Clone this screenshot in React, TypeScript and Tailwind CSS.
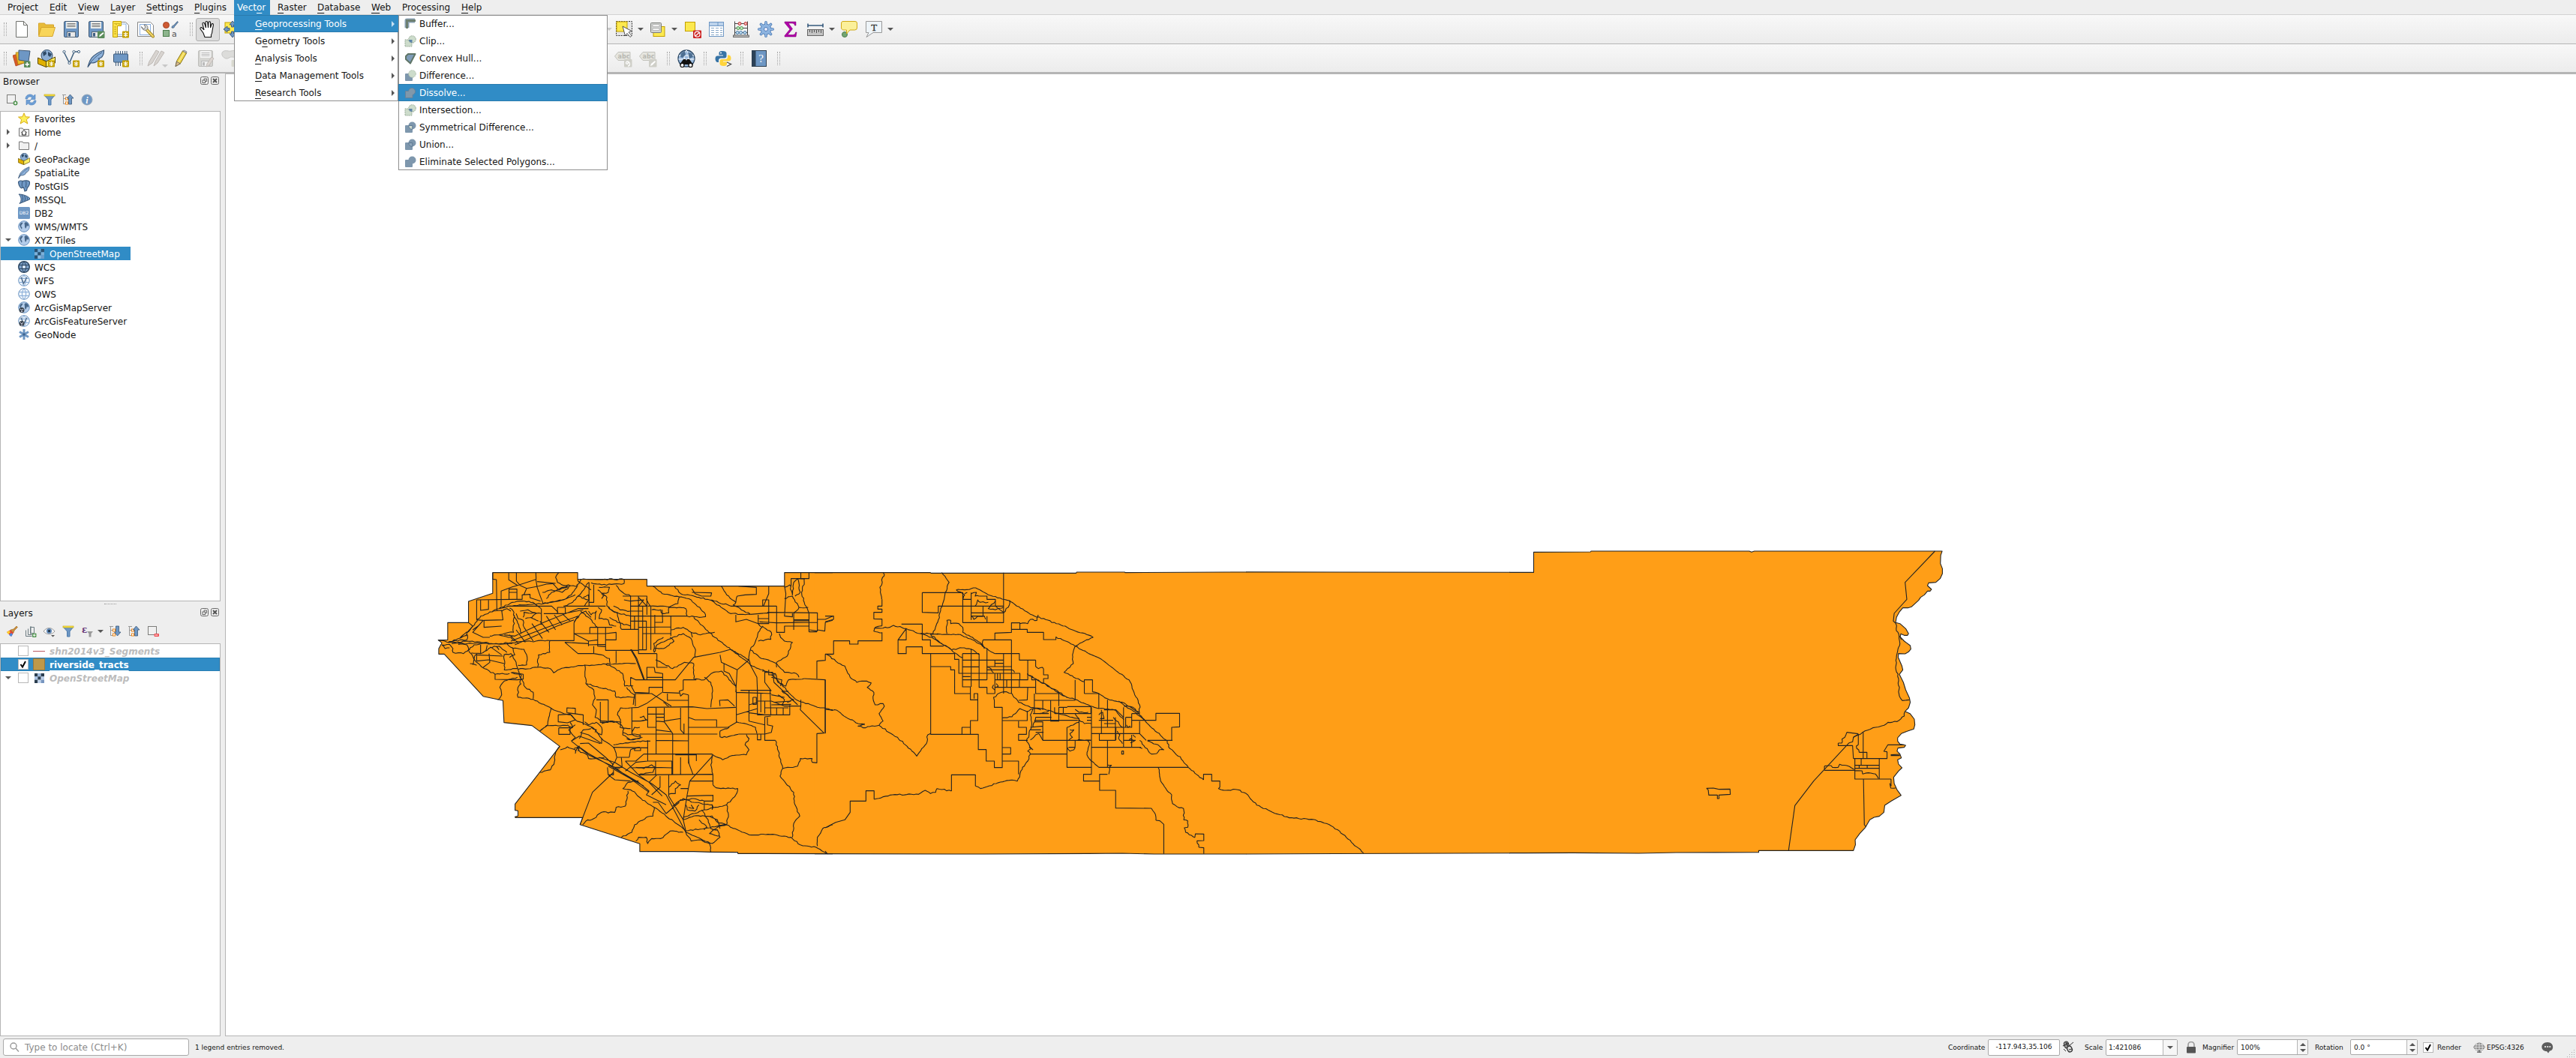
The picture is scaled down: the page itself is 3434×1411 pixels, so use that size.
import React from "react";

/* ---------- toolbar icons ---------- */

type IconProps = { children: React.ReactNode; s?: number; vb?: string; cls?: string };
const Ic = ({ children, s = 24, vb = "0 0 24 24", cls = "" }: IconProps) => (
  <svg width={s} height={s} viewBox={vb} fill="none" className={"block shrink-0 " + cls}>
    {children}
  </svg>
);

const NewBadge = () => (
  <g>
    <rect x="14" y="14.500" width="9" height="9" rx="1" fill="#c4a000" />
    <path d="M18.500 16v6M15.800 17.500l5.400 3M21.200 17.500l-5.400 3" stroke="#fff" strokeWidth="1.300" />
  </g>
);

const FileIcon = () => (
  <Ic><path d="M4.500 1.500h10l5 5v16h-15z" fill="#fff" stroke="#6e706c" /><path d="M14.500 1.500v5h5" stroke="#6e706c" /></Ic>
);
const FolderIcon = () => (
  <Ic>
    <path d="M1.500 20V4h8l1 2h11v4" fill="#e8bc3a" stroke="#d5a52c" />
    <path d="M1.500 21.500L5 9.500h18.500L20 21.500z" fill="#f8d559" stroke="#d5a52c" />
  </Ic>
);
const Disk = ({ grey = false }: { grey?: boolean }) => (
  <g>
    <rect x="2.500" y="1.500" width="19" height="21" rx="1.500" fill={grey ? "#d5d5d2" : "#6e97c4"} stroke={grey ? "#bdbdba" : "#415a75"} />
    <rect x="5" y="2" width="14" height="9" fill={grey ? "#f4f4f4" : "#eceeec"} />
    <path d="M6.500 4.500h11M6.500 6.500h11M6.500 8.500h11" stroke={grey ? "#bbb" : "#777"} />
    <rect x="6.500" y="15.500" width="11" height="7" fill={grey ? "#f0f0f0" : "#e9e9e9"} stroke={grey ? "#bbb" : "#5a6b7c"} />
    <rect x="8" y="17" width="3" height="4.500" fill={grey ? "#bbb" : "#3e5e82"} />
  </g>
);
const SaveIcon = () => <Ic><Disk /></Ic>;
const SaveAsIcon = () => (
  <Ic><Disk /><rect x="14" y="14.500" width="9.500" height="9.500" rx="1" fill="#5a8c5a" /><path d="M16 22l1-2.500 4.500-3.500 1 1.500-4.500 4z" fill="#fff" /></Ic>
);
const LayoutIcon = () => (
  <Ic>
    <path d="M1.500 2.500h17l4 4v15h-21z" fill="#fff" stroke="#888" />
    <rect x="4" y="5" width="15" height="14" stroke="#88aede" />
    <path d="M1.500 1.500h11v6h-5v15h-6z" fill="#fbe14a" stroke="#c4a000" />
    <path d="M4 4v1M6 4v2M8 4v1M10 4v2M3.500 9h2M3.500 12h2M3.500 15h2M3.500 18h2" stroke="#a98b00" />
    <NewBadge />
  </Ic>
);
const LayoutMgrIcon = () => (
  <Ic>
    <path d="M1.500 2.500h17l4 4v15h-21z" fill="#fff" stroke="#888" />
    <rect x="4.500" y="5.500" width="14" height="14" stroke="#88aede" />
    <path d="M13 12l9 9.500" stroke="#a08420" strokeWidth="4" strokeLinecap="round" />
    <path d="M13.500 12.500l8.500 9" stroke="#f3d86b" strokeWidth="2" strokeLinecap="round" />
    <path d="M6.500 8.500l3 3 2.500-2-2-3.500c4-.5 6 3 4.500 6-2 2.500-7 1.500-8-3.500z" fill="#d8dad8" stroke="#777" />
  </Ic>
);
const StyleIcon = () => (
  <Ic>
    <circle cx="6.500" cy="6.500" r="4" fill="#cf5b35" stroke="#a4421f" />
    <path d="M14 10c0-2 1-3 2.500-3l5-5.500 1 1-5 6c0 1.500-1.500 2-3.500 1.500z" fill="#6e97c4" stroke="#415a75" strokeWidth=".8" />
    <rect x="2.500" y="13.500" width="8" height="8" fill="#8db58d" stroke="#4d7d4d" />
    <text x="14" y="22" fontSize="11" fontFamily="DejaVu Sans" fill="#555">a</text>
  </Ic>
);
const HandIcon = () => (
  <Ic>
    <path d="M8 22.500L6 17l-4-5.500c-.5-1.500 1.500-2.500 2.500-1.200L7 13 5 5c-.3-2 2.200-2.500 2.800-.5L9.500 10 9 3c0-2 2.600-2 2.800 0l.7 7 .5-7c.2-1.800 2.600-1.500 2.600.3L15.500 10l1.500-4.500c.6-1.600 2.700-1 2.400.8L18 14c0 3-.5 4-1.500 5.500v3z" fill="#fff" stroke="#111" strokeWidth="1.100" />
  </Ic>
);
const PanSelIcon = () => (
  <Ic>
    <rect x="2" y="3" width="18" height="14" fill="#fce94f" stroke="#c4a000" />
    <path d="M12 1l4 5h-2.500v3h-3V6H8zM12 23l4-5h-2.500v-3h-3v3H8zM0 12l5-4v2.500h3v3H5V16z" fill="#6e97c4" stroke="#3b5878" strokeWidth=".9" />
  </Ic>
);
const SelectIcon = () => (
  <Ic>
    <rect x="1.500" y="1.500" width="21" height="19" stroke="#333" strokeDasharray="2 1.300" fill="#e4e4e4" />
    <rect x="2" y="2" width="14" height="13" fill="#fce94f" stroke="#c4a000" />
    <path d="M10 8l3.500 13 2.500-3.500 4 5 2-1.800-4-4.700 4-1.500z" fill="#fff" stroke="#444" strokeWidth=".9" />
  </Ic>
);
const FormIcon = () => (
  <Ic>
    <rect x="6" y="8.500" width="15" height="13" fill="#fce94f" stroke="#c4a000" />
    <rect x="2.500" y="3.500" width="14" height="13" rx="1" fill="#d0d2d0" stroke="#7b7d7a" />
    <rect x="5" y="6" width="9" height="2.500" fill="#fff" stroke="#888" strokeWidth=".5" />
    <rect x="5" y="11" width="9" height="2.500" fill="#fff" stroke="#888" strokeWidth=".5" />
  </Ic>
);
const DeselectIcon = () => (
  <Ic>
    <rect x="1.500" y="2.500" width="13" height="12" fill="#fce94f" stroke="#c4a000" />
    <rect x="12" y="13.500" width="11" height="10.500" rx="1" fill="#cc2222" />
    <circle cx="17.500" cy="18.700" r="3.500" stroke="#fff" strokeWidth="1.200" /><path d="M15 21l5-4.500" stroke="#fff" strokeWidth="1.200" />
  </Ic>
);
const TableIcon = () => (
  <Ic>
    <rect x="2.500" y="2.500" width="19" height="19" fill="#fff" stroke="#6e97c4" />
    <rect x="3" y="3" width="18" height="4" fill="#bcd3ec" /><path d="M3 7.500h18M14 3v4" stroke="#6e97c4" />
    <path d="M5 10.500h4M11 10.500h4M17 10.500h3M5 13.500h4M11 13.500h4M17 13.500h3M5 16.500h4M11 16.500h4M17 16.500h3M5 19.500h4M11 19.500h4M17 19.500h3" stroke="#88a8c8" />
  </Ic>
);
const AbacusIcon = () => (
  <Ic>
    <path d="M3.500 1.500v19M20.500 1.500v19M3.500 4.500h17M3.500 10.500h17M3.500 16.500h17" stroke="#444" />
    <rect x="1.500" y="20" width="21" height="2.500" fill="#bbb" stroke="#555" strokeWidth=".8" />
    <g strokeWidth="1"><g fill="#f2b4b4" stroke="#c03030"><circle cx="10" cy="4.500" r="2" /><circle cx="18" cy="4.500" r="2" /></g>
    <g fill="#c2e6c2" stroke="#4c9a4c"><circle cx="8" cy="10.500" r="2" /><circle cx="12.500" cy="10.500" r="2" /></g>
    <g fill="#bcd9ee" stroke="#4a7ba6"><circle cx="7" cy="16.500" r="2" /><circle cx="11.500" cy="16.500" r="2" /><circle cx="17" cy="16.500" r="2" /></g></g>
  </Ic>
);
const GearIcon = () => (
  <Ic>
    <g stroke="#4d7bb5" strokeWidth="3.600" strokeLinecap="round"><path d="M12 2.800v18.400M2.800 12h18.400M5.500 5.500l13 13M18.500 5.500l-13 13" /></g>
    <circle cx="12" cy="12" r="7" fill="#8db4e0" stroke="#4d7bb5" />
    <g stroke="#8db4e0" strokeWidth="2" strokeLinecap="round"><path d="M12 2.800v18.400M2.800 12h18.400M5.500 5.500l13 13M18.500 5.500l-13 13" /></g>
    <circle cx="12" cy="12" r="2.500" fill="#eef" stroke="#4d7bb5" />
  </Ic>
);
const SigmaIcon = () => (
  <Ic><path d="M4 2h15v5h-1.500C17 4.800 16 4 14 4H9l5.500 7.500L8 19.500h6.500c2.500 0 3.500-1 4.200-3.500H20L19 22H4v-1.500l7-8.500L4 3.500z" fill="#b000a8" stroke="#75006f" strokeWidth=".5" /></Ic>
);
const RulerIcon = () => (
  <Ic>
    <path d="M2 7h20M2 4.500v5M22 4.500v5" stroke="#35597c" strokeWidth="1.600" />
    <rect x="1.500" y="12.500" width="21" height="8" fill="#c4c4c4" stroke="#666" />
    <path d="M4.500 13v3M7.500 13v4M10.500 13v3M13.500 13v4M16.500 13v3M19.500 13v4" stroke="#555" />
  </Ic>
);
const TipIcon = () => (
  <Ic>
    <circle cx="6" cy="19" r="3.500" fill="#73a673" stroke="#4d7d4d" />
    <path d="M4 1.500h16a2.500 2.500 0 012.500 2.500v6a3 3 0 01-3 3H13l-4.500 5V13H5c-2 0-3.500-1-3.500-3V4C1.500 2.500 2.500 1.500 4 1.500z" fill="#fbf09a" stroke="#d0aa18" />
  </Ic>
);
const TextIcon = () => (
  <Ic>
    <path d="M1.500 1.500h21v15H11l-9 6 3-6H1.500z" fill="#eef4f8" stroke="#999" />
    <text x="12.200" y="14" fontSize="13" fontFamily="Liberation Serif" textAnchor="middle" fill="#333" stroke="#333" strokeWidth=".3">T</text>
  </Ic>
);
const DataSrcIcon = () => (
  <Ic>
    <path d="M0 8l10-3 5 13-11 4z" fill="#d85a28" stroke="#a83c12" strokeWidth=".7" />
    <path d="M4 4l13-1 1 14-11 3z" fill="#e9b82c" stroke="#a8820a" strokeWidth=".7" />
    <path d="M8 1l15 1-2 14-13-2z" fill="#6e97c4" stroke="#415a75" />
    <rect x="15" y="15.500" width="8.500" height="8.500" rx="1" fill="#5a8c5a" /><path d="M19.200 17v5.500M16.500 19.700H22" stroke="#fff" strokeWidth="1.500" />
  </Ic>
);
const GeoPkg = ({ badge = true, s = 24 }: { badge?: boolean; s?: number }) => (
  <Ic s={s}>
    <circle cx="12.500" cy="8" r="7.500" fill="#8caed4" stroke="#2f4a66" />
    <path d="M7 4l4-2 1 4-4 3zM14 3l5 3-2 4-3-2z" fill="#2f4a66" />
    <path d="M.5 11l11 5v7.500L.5 19z" fill="#e0b000" stroke="#5d4a00" />
    <path d="M11.500 16L23.500 10v8l-12 5.500z" fill="#fcee62" stroke="#5d4a00" />
    {badge && <NewBadge />}
  </Ic>
);
const VNewIcon = () => (
  <Ic>
    <path d="M2.500 4l7 14L16 3h6" stroke="#41617f" strokeWidth="1.500" />
    <g fill="#fff" stroke="#41617f"><circle cx="2.500" cy="3" r="1.600" /><circle cx="9.500" cy="18" r="1.600" /><circle cx="15.500" cy="3" r="1.600" /><circle cx="22" cy="3" r="1.600" /></g>
    <NewBadge />
  </Ic>
);
const Feather = ({ badge = true, s = 24 }: { badge?: boolean; s?: number }) => (
  <Ic s={s}>
    <path d="M1 23.500C3 17 3.500 8 22.500 1c0 5-1 8-4 10l-3 1 1 1c-4 5-8 5-11.500 5z" fill="#8fb3dc" stroke="#3c5878" strokeWidth="1.200" />
    <path d="M1 23.500C5 16 10 10 20 4" stroke="#3c5878" />
    {badge && <NewBadge />}
  </Ic>
);
const ChipIcon = () => (
  <Ic>
    <path d="M5.500 2v20M8.500 2v20M11.500 2v20M14.500 2v20M17.500 2v20M20 2v18" stroke="#3b5878" />
    <rect x="2.500" y="6" width="19" height="11" rx="1" fill="#6e97c4" stroke="#3b5878" />
    <NewBadge />
  </Ic>
);
const PencilsGrey = () => (
  <Ic>
    <path d="M1 22l2-6L12 1l4 2L7 18z" fill="#d8d4d0" stroke="#bdb8b4" /><path d="M9 22l2-6 8-14 4 2-9 14z" fill="#d8d4d0" stroke="#bdb8b4" />
  </Ic>
);
const PencilIcon = () => (
  <Ic>
    <path d="M5 22.500l1.500-7L14.500 2l5 3-8 13.500z" fill="#efd651" stroke="#8a7410" />
    <path d="M14.500 2l2-1 3.500 2-.5 2z" fill="#bbb" stroke="#666" strokeWidth=".6" /><path d="M5 22.500l1.500-6.500 5 3z" fill="#d9b98b" stroke="#555" strokeWidth=".7" />
    <path d="M9 17L17 3.500" stroke="#fff3a0" />
  </Ic>
);
const SaveGrey = () => (
  <Ic><Disk grey /><path d="M13 23l1-4 6-9 3 2-6 9z" fill="#dcd6d2" stroke="#c2bcb8" /></Ic>
);
const BlobGrey = () => (
  <Ic><path d="M2 3c4-3 8 0 11-1s8-1 9 3-3 6-7 5-5 3-9 2-7-6-4-9z" fill="#dcdcda" stroke="#c6c6c4" /><rect x="13.500" y="14" width="9" height="9" rx="1" fill="#d9d9d0" /></Ic>
);
const TagIcon = ({ pen = false }: { pen?: boolean }) => (
  <Ic>
    <path d="M.5 9L5 3.500h16v11H5z" fill="#e6e6e0" stroke="#c2c2bc" />
    <text x="12.500" y="12" fontSize="8" fontWeight="bold" fontFamily="DejaVu Sans" textAnchor="middle" fill="#b8b8b2">abc</text>
    <rect x="13" y="13" width="10.500" height="10.500" rx="1" fill="#cfcfc8" />
    {pen ? <path d="M15 22l1-3 5-4 1 1.500-4.500 4.500z" fill="#fff" /> : <path d="M18 22c3 0 3.500-4 1-5.500s-4.500 1-3 2.500c2 1 3-1 2-2" stroke="#fff" strokeWidth="1.300" />}
  </Ic>
);
const MetaSearch = () => (
  <Ic>
    <circle cx="12" cy="12" r="11" fill="#9dbde0" stroke="#2f4a66" strokeWidth="1.300" />
    <path d="M12 1c-4 4-4 12 0 16M12 1c4 4 4 12 0 16M2 8h20M1.500 13h21" stroke="#fff" />
    <path d="M5 5l5-3 1 5-4 4-3-1zM14 4l5 1 2 5-5 2z" fill="#4d6f92" />
    <path d="M8 13h3l1 2 1-2h3l5 7H3z" fill="#111" /><circle cx="6.500" cy="21" r="2.600" fill="#fff" stroke="#111" strokeWidth="1.300" /><circle cx="17.500" cy="21" r="2.600" fill="#fff" stroke="#111" strokeWidth="1.300" />
  </Ic>
);
const PythonIcon = () => (
  <Ic>
    <path d="M11 2c-4 0-4.500 1.500-4.500 3v2.500H12v1H4.500C2.500 8.500 1.500 10 1.500 12.500S3 17 4.500 17H6v-2.500c0-2 1.500-3 3-3h5c1.500 0 2.500-1 2.500-2.500V5c0-2-2-3-5.500-3z" fill="#3673a5" />
    <path d="M12.500 22c4 0 4.500-1.500 4.500-3v-2.500h-5v-1h7.500c2 0 3-1.500 3-4S21 7.500 19.500 7.500H18V10c0 2-1.500 3-3 3h-5c-1.500 0-2.500 1-2.500 2.500V19c0 2 2 3 5 3z" fill="#ffd43b" />
    <circle cx="9" cy="4.500" r="1" fill="#fff" /><path d="M17 17l5.500 2.500L17 22.500" stroke="#444" strokeWidth="1.300" fill="#fff" />
  </Ic>
);
const BookIcon = () => (
  <Ic>
    <rect x="2.500" y="1.500" width="19" height="21" fill="#6e97c4" stroke="#2c3e50" /><rect x="3" y="2" width="4.500" height="20" fill="#2c4258" />
    <text x="14.500" y="17" fontSize="15" fontFamily="Liberation Serif" textAnchor="middle" fill="#fff">?</text>
  </Ic>
);

/* ---------- small 16px icons ---------- */

const S = ({ children }: { children: React.ReactNode }) => <Ic s={16} vb="0 0 16 16">{children}</Ic>;
const BoxPlus = () => <S><rect x="1.500" y="1.500" width="11" height="11" fill="#f0f0f0" stroke="#7d7d7a" /><circle cx="12.500" cy="12.500" r="3" fill="#5a9a5a" /><path d="M12.500 11v3M11 12.500h3" stroke="#fff" /></S>;
const BoxMinus = () => <S><rect x="1.500" y="1.500" width="11" height="11" fill="#f0f0f0" stroke="#7d7d7a" /><rect x="9.500" y="11" width="6.500" height="4" rx="1" fill="#ef4b50" /><path d="M10.500 13h4" stroke="#fff" /></S>;
const Refresh = () => <S><path d="M1 7c0-4 3-6 6-6 2 0 3 .5 4.500 2L14 1v6.500H8L10 5C7 3 4 4 3.500 7zM15 9c0 4-3 6-6 6-2 0-3-.5-4.500-2L2 15V8.500h6L6 11c3 2 6 1 6.500-2z" fill="#6e9fd6" stroke="#4a7db8" strokeWidth=".6" /></S>;
const Funnel = () => <S><path d="M1 2h14l-5 6v7H6.500V8z" fill="#6e97c4" stroke="#4d7bad" /><rect x="1" y="1" width="14" height="2" fill="#fce94f" stroke="#c4a000" strokeWidth=".6" /></S>;
const TreeArrow = ({ down = false }: { down?: boolean }) => (
  <S>
    <path d="M1.500 1v12.500h3M1.500 6.500h3M0 1.500h5" stroke="#999" /><rect x="4.500" y="5" width="3" height="3" fill="#fff" stroke="#f08a1c" /><rect x="4.500" y="11" width="3" height="3" fill="#fff" stroke="#f08a1c" />
    {down ? <path d="M8.500 1h4v8H15l-4.500 5L6.500 9h2z" fill="#6e97c4" stroke="#3b5878" strokeWidth=".8" /> : <path d="M8.500 14h4V6H15l-4.500-5L6.500 6h2z" fill="#6e97c4" stroke="#3b5878" strokeWidth=".8" />}
  </S>
);
const Info = () => <S><circle cx="8" cy="8" r="7" fill="#6e97c4" stroke="#9ab" /><text x="8" y="12.500" fontSize="12" fontStyle="italic" fontWeight="bold" fontFamily="Liberation Serif" textAnchor="middle" fill="#fff">i</text></S>;
const Brush = () => <S><path d="M1 9l5-3 4 4-3 5z" fill="#e84030" /><path d="M1 9l3-2 2 2-3 3z" fill="#fad02c" /><path d="M4 13l3-3 2 2-2 3z" fill="#4a8be0" /><path d="M6 6l4-1 4-4 1.500 1.500L11 7l-1 3z" fill="#c89040" stroke="#a06a20" strokeWidth=".6" /></S>;
const AddGroup = () => <S><path d="M1.500 6.500v8h8M4.500 4.500v8h8M7.500 2.500h5v8h-5zM8 1v12" stroke="#6b7a80" /><rect x="10" y="10.500" width="5.500" height="5.500" rx="1" fill="#5a9a5a" /><path d="M12.700 11.500v3.500M11 13.200h3.500" stroke="#fff" /></S>;
const Eye = () => <S><path d="M0 8c4-6 11-6 15 0-4 5-11 5-15 0z" fill="#f4f4f4" stroke="#999" /><circle cx="7.500" cy="7.500" r="3.500" fill="#5f87b5" /><circle cx="7.500" cy="7.500" r="1.500" fill="#1c2b3a" /><path d="M10 13h5l-2.500 2.500z" fill="#555" /></S>;
const Epsilon = () => <S><text x="1" y="10" fontSize="12" fontWeight="bold" fontFamily="DejaVu Serif" fill="#6a3a78">ε</text><path d="M8 8h8l-2.500 3v4.500h-3V11z" fill="#999" /></S>;

const Star = () => <S><path d="M8 .8l2.100 5 5.400.3-4.200 3.400 1.500 5.500L8 11.900 3.200 15l1.500-5.500L.5 6.100l5.400-.3z" fill="#fdf05a" stroke="#d8ac18" /></S>;
const Folder16 = ({ home = false }: { home?: boolean }) => (
  <S><path d="M1.500 13.500V3H6l1 1.500h7.500v9z" fill="#f0f0f0" stroke="#777" />{home && <path d="M4.500 9L8 5.500 11.500 9M5.500 8.500V12h5V8.500" stroke="#222" />}</S>
);
const Pg = () => <S><path d="M.5 2.500C2 .5 5 1 6 1.500c3-1 8-1 9.500 1 .5 3-1.500 7-3 7.500l-1 4-2.500 1-1.500-5-3 1C2.500 10 .5 6 .5 2.500z" fill="#6e97c4" stroke="#3a587a" strokeWidth="1.100" /><path d="M6 2c-1 3-1 6 0 8M10.500 2c1 3 0 5 0 8" stroke="#3a587a" /></S>;
const Ms = () => <S><path d="M1 1c5 0 11 2 14.500 5v2L2 13.500C5 10 5 5 1 1z" fill="#6e97c4" stroke="#3a587a" /><path d="M5 2c2 3 2 7 0 10M8.500 3c1.500 3 1.500 5 0 8M12 5c.7 2 .7 3 0 4.500" stroke="#3a587a" /></S>;
const Db2 = () => <S><rect width="16" height="16" rx="1.500" fill="#6e97c4" /><text x="8" y="10" fontSize="6" fontFamily="DejaVu Sans" textAnchor="middle" fill="#fff">DB2</text></S>;
const Globe16 = ({ kind }: { kind: string }) => {
  const land = kind === "wms" || kind === "ams";
  const wcs = kind === "wcs";
  return (
    <S>
      <circle cx="8" cy="8" r="7.300" fill={wcs ? "#7d9fc6" : land ? "#b4cdea" : "#eef5fc"} stroke={wcs ? "#29435e" : "#6a93c0"} strokeWidth={wcs ? 1.4 : 1} />
      {land && <path d="M2 6l1.500-2.500 2-1 1 1L5 5.500 4 7.500l1.500 2L5 12 3.500 9.500zM8.500 3.500l2-1.500 2.500 1.500 1.500 3-1.500 1.500-1-1.500-1 3-1 1.500-1-2.500V7z" fill="#47678a" />}
      {!land && <path d="M8 1C4.500 5 4.500 11 8 15M8 1c3.500 4 3.500 10 0 14M1.500 5.500h13M1.500 10.500h13" stroke={wcs ? "#29435e" : "#84aad6"} />}
      {wcs && <rect x="6" y="6.500" width="4" height="3" fill="#dfeaf6" />}
      {(kind === "wfs" || kind === "afs") && <path d="M4 3.500L7.500 12 12 3.500" stroke="#56708c" strokeWidth="1.500" />}
      {(kind === "ams" || kind === "afs") && <g><circle cx="5" cy="11.500" r="3.500" fill="#3c4650" /><path d="M3 10l2 2 2-2M4 13.500h2" stroke="#dde" /></g>}
    </S>
  );
};
const GeoNode = () => <S><path d="M8 1v14M2 4.500l12 7M14 4.500l-12 7" stroke="#6e97c4" strokeWidth="3" /><circle cx="8" cy="8" r="1.800" fill="#3f6590" /></S>;
const Tiles = ({ sel = false }: { sel?: boolean }) => {
  const dark = sel ? "#2b5272" : "#2c3e50";
  const cells = [[0, 0, dark], [4.3, 0, sel ? "#6ea6d2" : "#9db9dc"], [8.6, 0, dark], [0, 4.3, sel ? "#7db0d8" : "#a9c2e2"], [4.3, 4.3, dark], [8.6, 4.3, sel ? "#7db0d8" : "#b9cde8"], [0, 8.6, dark], [4.3, 8.6, sel ? "#8fbce0" : "#c0d3ec"], [8.6, 8.6, sel ? "#6a9ccb" : "#7896c0"]] as [number, number, string][];
  return <Ic s={13} vb="0 0 13 13">{cells.map(([x, y, c], i) => <rect key={i} x={x} y={y} width="4.400" height="4.400" fill={c} />)}</Ic>;
};

/* ---------- geoprocessing icons ---------- */

const Geo = ({ kind }: { kind: string }) => {
  const b = "#7e97ad";
  return (
    <Ic s={16} vb="0 0 16 16">
      {kind === "buffer" && <g><path d="M3.500 13V3.500H14" stroke="#8ba2b5" strokeWidth="6" strokeLinejoin="round" /><path d="M3.500 14V3.500H15" stroke="#6d7f70" strokeWidth="3" /></g>}
      {kind === "clip" && <g><rect x="1" y="6" width="9" height="9" fill="#cddccb" stroke="#8fa38e" strokeDasharray="1.500 1" /><circle cx="10.500" cy="5.500" r="4.800" fill="#cddccb" stroke="#8fa38e" strokeDasharray="1.500 1" /><path d="M6 6h4.500v4C8 10 6 8.500 6 6z" fill="#5d83a8" /></g>}
      {kind === "hull" && <path d="M5 2h9.500L8 14.500 2 9V5z" fill="#7e9cb8" stroke="#5f7567" strokeWidth="2" strokeLinejoin="round" />}
      {kind === "diff" && <g><rect x="1" y="5" width="10" height="10" rx="1" fill={b} /><circle cx="10.500" cy="5.500" r="4.800" fill="#cddccb" stroke="#a9bba7" strokeDasharray="1.500 1" /></g>}
      {kind === "dissolve" && <g fill="#8098ab" stroke="#66829a"><path d="M1.500 5.500h4c1-6 9.500-5 9 1-.2 2-1.500 3.500-3.500 4v4H1.500z" /></g>}
      {kind === "merge" && <g fill={b}><rect x="1" y="5" width="10" height="10" rx="1" /><circle cx="10.500" cy="5.500" r="5" /></g>}
      {(kind === "symdiff" || kind === "union") && <g fill={b}><rect x="1" y="5" width="10" height="10" rx="1" /><circle cx="10.500" cy="5.500" r="5" /><path d="M5.800 5.500h5v5c-3 0-5-2-5-5z" fill={kind === "symdiff" ? "#d2dccf" : "#90a7ba"} stroke="#5e7a94" /></g>}
    </Ic>
  );
};

/* ---------- map ---------- */

type Section = { transform: string; straight: string; rough: string };

const WEST: Section = {
  transform: "translate(560 740) scale(0.35077 0.33333)",
  straight: `276,71 276,97 290,99 292,225;215,180 350,178 388,178 388,160 418,158 418,172 458,185;215,180 215,260;230,180 230,222 260,218 260,180;308,205 308,145 350,128 370,122;338,180 338,137 368,137 368,178;338,150 368,150;
337,71 337,100 370,122 440,98 445,130 455,160 468,196;440,71 441,98;366,71 366,105 380,122 405,134 450,125 480,117 505,115;445,107 515,114;405,134 395,158;
340,205 500,205 525,230;522,210 552,210 552,235 522,235 522,210;470,235 545,235 620,220;275,225 310,222 315,260 243,262 243,290 310,285;215,260 240,262 200,310 240,330 265,330;200,300 220,285 240,262;461,215 461,280;
320,320 360,325 470,270 600,215 640,215;345,345 470,295 600,245 585,270;360,360 520,285 585,260;340,320 375,355;365,300 400,350;395,290 430,345;425,275 465,335;455,265 490,310;480,245 515,300;510,240 540,280;540,235 570,265;
493,343 585,343 585,272;230,360 230,395;255,362 250,385;290,365 300,380;210,400 315,405;215,425 260,420 320,435;215,395 215,425;262,395 265,430 240,450;285,478 285,498 370,500 392,497 392,478 350,470;270,370 310,400;
525,640 525,668 560,672 590,660 570,637 525,640;558,632 558,612 590,614 590,635;527,692 527,718 570,718 570,692 527,692;560,632 620,640 620,680;
670,580 715,580 715,670 685,670 685,588;608,710 640,720 690,755;690,755 690,735;575,745 605,725 685,755;575,745 640,800 740,850 870,950;608,755 640,753 705,810 735,840;600,765 640,795 700,830 830,910 870,945 860,960 935,1000;680,810 740,830 800,870 880,915 935,960 960,1010 1010,1110;715,845 850,925;
712,850 715,880 735,880 735,855 760,855;715,880 740,900 800,905;735,870 655,950 608,1079;765,812 768,850 740,850;
1025,905 1113,905;1000,1060 1015,960 1025,905 1113,803;1113,960 1113,985 1080,985;1015,965 1113,962;830,880 1113,878;1113,878 1113,920;945,880 945,965 1000,1060 1010,1105;895,825 957,825 957,880;895,850 957,852;895,825 895,880;865,742 865,825 895,825;990,810 990,878;1020,800 1022,835 1037,878;970,800 1050,800 1050,825;960,715 960,880;850,797 1110,797;835,717 1130,717;1210,717 1310,717;897,690 897,797;897,742 1020,744;1020,560 1020,835;
1020,690 1170,690 1205,668;1020,650 1045,660 1127,660 1127,688;865,610 865,690 897,690;865,610 1035,608 1090,615 1200,610;897,612 897,717;865,637 928,637 928,612;897,650 928,650;928,665 990,655;990,612 990,700 1003,715;897,665 928,668 960,715;897,700 955,708;928,637 928,668;1003,675 1003,717;
818,555 818,605;805,612 805,717;805,665 837,665 865,660;800,612 830,610 860,595 920,550;815,555 880,555 955,605;735,770 865,772;865,745 875,745;780,825 820,825 850,797;750,810 795,810;780,825 830,880;780,865 820,830 865,825;830,880 870,910 900,880;870,910 920,965;912,885 912,930 880,960;815,770 815,783 838,783 838,770;800,852 895,850;
642,110 642,205;660,120 660,190 640,190;770,165 862,165 862,205;775,180 800,185;800,165 800,298;800,205 862,205 862,240;830,165 830,395 900,395;846,205 846,380;800,245 1015,245;800,265 860,265 860,380 832,380;845,315 955,315;877,205 877,380;892,240 892,315;830,290 953,288;953,245 953,325;920,220 922,270 892,270;800,225 846,225;800,185 850,180 830,205;830,170 862,205;815,245 815,298;
545,205 705,205;585,315 705,315 745,310 745,340 705,340;585,315 640,345 675,340;640,360 705,358;645,290 645,315;645,290 730,290;675,290 675,365 705,367;705,290 705,382 830,382;550,350 600,395 660,395;550,350 640,355;640,345 640,365;660,365 660,395 690,400;745,385 745,433;765,298 830,298;
800,378 820,415 850,500;803,378 824,415 853,500;862,500 862,450 890,450 893,470 922,475 922,550;850,500 970,500 1040,410 1140,390 1180,378;862,490 922,490;800,490 800,520 815,550 870,553 870,530 922,530;800,490 820,500 850,500;900,395 900,450 940,450;1000,500 1050,500;1000,500 1000,540 985,545 990,565 1000,555 1020,560;940,555 940,582 1020,582;922,550 985,553;
1033,135 1045,155 1070,165 1105,165 1108,152 1033,150;1205,165 1235,160 1278,158 1278,130 1210,125;1325,125 1325,155 1305,205;1302,205 1302,180 1325,180 1325,275 1285,275 1285,235;1285,255 1325,255;1200,240 1200,268 1240,258 1285,275;1320,230 1510,232 1510,305 1480,300;1355,205 1355,310 1385,310 1385,285 1480,285;1290,268 1355,272 1510,270;1385,125 1390,155 1385,245 1415,248 1415,230;1410,125 1410,95 1478,95 1478,71;1447,71 1447,95;1478,230 1478,308;1420,235 1420,300;1420,260 1478,260;1420,264 1478,264;1510,258 1540,258 1568,245;1510,300 1538,305 1540,270 1568,262;1180,205 1355,205;1255,238 1325,232;1478,308 1508,308;
1140,400 1145,430 1205,460 1250,420;1155,435 1155,465 1175,475 1200,525 1202,550;1205,460 1200,550;1255,440 1280,490 1282,542;1310,465 1310,510 1335,545;1460,495 1540,500 1540,713;1310,470 1340,470 1345,510 1395,560 1435,600;1325,460 1325,480 1350,480;1335,490 1375,500 1370,525;
1218,542 1330,542 1333,640;1202,550 1335,555;1202,550 1202,668;1250,542 1250,665 1310,680;1282,542 1282,640 1405,640 1405,600;1295,555 1295,630;1250,600 1282,590;1265,570 1265,598 1278,598 1278,570 1265,570;1282,585 1335,585 1385,605 1447,605 1447,580;1310,612 1400,612;1202,640 1282,615;1355,612 1355,640;1380,612 1380,640;1250,632 1310,640;1335,560 1385,570;1310,585 1310,635;1345,590 1410,585;1335,600 1410,598;
1140,605 1138,582 1170,580 1195,605;1333,645 1310,648 1310,742 1350,742;1320,650 1320,680 1340,685 1335,710 1310,717;1295,718 1295,740 1282,740 1282,718;1447,605 1445,620 1535,713 1508,715 1508,832 1490,830;1508,495 1508,425 1540,422 1540,398 1568,398;885,990 905,990 935,1035 985,990;1080,985 1080,1020;990,935 1020,935`,
  rough: `466,196 540,180 590,160;527,71 515,90 522,110 545,122 600,124;480,175 500,150 540,130 560,125;465,150 500,140 540,150 565,130;505,115 530,140 570,125;612,98 575,160 545,180 470,195 340,205 300,215 230,245 190,300 150,335;642,110 600,165 580,190 550,205;599,97 605,110 650,140;600,165 640,180;
300,215 350,190 380,185 430,190 460,215;340,212 357,230 355,310 330,312 300,320 265,325;310,225 330,215 345,225;357,240 375,280 385,315;365,235 372,255 392,262 395,290;392,250 395,230 460,235;380,225 410,220 445,235;400,255 425,250 440,235;420,250 450,265;120,355 180,345 290,355 440,345 493,343;105,350 145,335 180,320 178,340 125,345;69,341 110,350 180,355 350,355;184,271 200,285 180,310 175,325;300,320 345,330 360,345;
83,360 112,358 125,375 125,390 165,395 185,378 178,360 145,358;83,360 95,375 112,372;180,385 205,360 235,355;195,392 230,395 270,370;200,440 210,400;185,385 200,405 215,430 245,455 285,478 340,475;190,435 215,442;320,400 320,460 370,455;330,355 345,370 395,378 405,400 405,440 372,442;350,370 360,400 340,410;318,400 345,395 365,430 372,458;265,370 300,365 330,390;493,343 493,390 450,400 447,448;
372,458 447,450 495,455 508,472 530,458 600,443 705,437 820,435;372,460 380,490 400,530 430,550 430,575;385,515 372,530 372,570 430,578 500,615 540,632 575,640;345,470 385,480 380,515;370,490 320,505 303,530 310,560 295,580;498,615 485,680 455,705;455,705 480,683 560,683;575,640 590,660 655,690 690,735 735,770 748,810 730,845;625,668 640,680 670,670 690,690 690,720 670,710;570,670 580,690 565,700 590,730 575,745;605,735 620,700 650,695;560,680 575,690 590,680;650,690 670,700 665,710;
590,790 600,770 610,790 635,800 640,815 700,812;585,775 605,765 600,785;531,766 515,790 510,830 495,860 455,870;533,780 560,768 590,780 590,795;770,935 800,940 820,955 840,975 890,1010 1000,1095 1010,1110 1110,1155;770,935 790,910 830,905;790,945 780,1005 745,1010 740,1030 690,1030 660,1055 630,1065 618,1080;890,1010 885,1045 860,1050 815,1080 805,1110 765,1130;820,1145 830,1130 860,1130 865,1155 880,1135 915,1135 950,1105 1000,1110;1010,1110 1030,1145 1060,1140 1100,1155 1105,1189;
1010,1105 1165,1080 1180,1090 1250,1120 1340,1118 1410,1130 1445,1160 1505,1170 1550,1196;1165,1080 1172,1040 1165,1000 1200,960 1207,935 1125,932 1113,920;1110,800 1105,840 1113,878;1080,985 1040,975 990,980 960,1005;1110,797 1150,820 1185,803 1240,800 1250,780 1235,760 1250,735 1240,718;1175,690 1140,705 1140,728 1165,730 1210,718;
800,612 762,612 750,640 762,660 760,690 800,695;775,695 770,720 800,740 835,735 835,720 805,717;835,650 850,645 860,660 840,665;805,717 815,690 835,690;735,760 760,755 800,750 865,745;795,810 800,780 835,770;820,850 850,855 880,840 895,850 885,870 830,880;690,675 730,665 765,680 775,695;770,710 790,720 840,725;785,735 800,740 845,730;
612,98 775,98 775,115 690,120 650,112;680,130 720,130 715,150 690,155 710,170 710,205 735,225;675,140 700,160 690,175;745,122 770,150 800,165;885,125 920,155 985,168 1030,180 1080,230 1085,247 1060,250 1015,245 1010,215 985,210 945,210 945,232 920,235 915,220 880,220;985,168 980,195 950,207 865,205;765,298 750,235 720,215;715,210 740,230 800,245;735,205 760,220 800,225;720,250 750,270 800,285;
610,225 640,250 675,290;585,272 610,235 630,225 650,250;677,210 690,220 680,255 715,260 720,280 745,285;640,225 650,240 670,225 665,260;620,170 640,160 642,180 625,205;690,400 720,415 722,435;860,175 875,205;
705,437 735,450 770,475 778,525 810,525;625,440 630,515 740,545 745,570 815,570;630,515 660,540 665,575 655,600 670,620 665,650 690,665 765,670;785,530 800,550 815,560 810,600;895,420 960,455 1005,430 1040,435;1040,435 1040,495 1080,500 1115,470 1145,465 1200,525;890,390 900,360 960,330 1000,315 1030,335 1047,380 1045,410;890,375 925,375 965,345 950,330;890,390 888,355 925,330;955,300 1000,290 1030,310 1065,320 1085,315 1120,310;1030,310 1035,330;1040,250 1060,270 1120,330 1180,378 1220,400 1250,420;1080,490 1105,510 1112,545 1105,610;925,590 945,605;
967,125 990,155 1060,170 1100,180 1180,235 1255,238;1100,180 1170,200 1180,205;1145,125 1165,160 1200,190 1190,200 1255,238;1205,165 1200,190;1385,175 1415,165 1440,210 1420,235;1385,130 1405,120 1415,160 1420,110 1435,95 1445,150 1425,165;1435,95 1460,95 1460,110 1450,150 1460,190 1475,225 1478,232;1440,210 1475,210;1285,275 1300,290 1285,310 1275,345 1255,380 1250,420 1255,440;1300,285 1335,310 1333,338 1285,345;1365,315 1370,330 1385,345 1415,350 1400,385 1395,405 1355,430 1355,450;
1255,380 1290,410 1355,435 1385,470 1430,475 1440,490;1180,378 1220,410 1255,440 1310,465;1300,465 1350,475 1360,510 1390,525 1400,500 1460,495;1335,480 1375,520 1430,580 1510,610 1568,620;1400,545 1375,545 1420,580 1395,590;1360,560 1385,580 1375,600;1202,668 1250,680 1275,690 1280,715;1350,742 1378,855 1368,885 1420,950 1425,1000 1443,1045 1420,1075 1415,1130;1490,830 1490,815 1445,815 1435,845 1378,855;1568,1080 1530,1095 1510,1130 1510,1165;
960,1005 1000,975 1040,990 1110,1000 1113,1015;1000,1050 1080,1020 1165,1000;1000,1060 1040,1045 1110,1045 1130,1070;1070,1020 1095,1060 1105,1095 1130,1100 1140,1130 1110,1155;1010,1000 1015,1020 1045,1025 1060,1000;1130,1070 1165,1080 1130,1090 1100,1115 1140,1125;1060,1060 1090,1090 1080,1100;945,930 970,905 990,920 970,935 970,955 945,958;1110,1000 1110,1020;1100,1045 1130,1060 1140,1095;1020,1010 1040,1015 1030,1000`,
};

const CENTRAL: Section = {
  transform: "translate(1100 740) scale(0.35077 0.33333)",
  straight: `216,178 216,205 200,205 200,217 216,217 216,230 185,230 185,256 216,257 216,284;216,310 216,344 125,344 125,357 93,357 93,344 32,344 32,397 0,397;0,500 0,715;0,245 32,245 32,258 0,268;
678,71 678,178;369,151 458,151 523,151 523,271 678,271 678,178;369,151 369,230 430,232 430,205 678,205;555,151 555,260;585,165 615,165 615,178 647,178 647,205;523,178 555,178;555,232 678,232;600,205 600,245;615,245 615,271;555,245 600,245;647,205 665,220 678,230;
308,295 308,340 277,340 308,295;277,340 277,395 308,395 308,368 369,368 369,395 492,395 492,418 508,418 508,474 710,474;290,277 369,277 369,340 400,340 400,365 450,365;401,395 401,715 401,718 582,718 582,779 612,779 612,825 643,825 643,851 673,851 673,610 643,610 643,582;401,447 477,447 477,460 492,460 492,555 552,555 552,580 580,580 580,663 552,663 552,690 520,690 520,718;552,690 552,718;566,575 566,555 580,555 580,580;
522,395 585,395;522,395 522,528 552,528 552,555;555,375 555,528;522,421 615,421;522,448 585,448;522,487 552,487;522,500 615,500;585,395 585,530 615,530 615,555 645,555;615,375 615,500;585,448 585,474;615,421 678,421;615,447 710,447;615,460 710,460;645,421 645,447;645,434 678,434;645,395 738,395 738,421 800,421;678,395 678,555;708,340 708,555;600,340 708,340;645,340 645,313 708,310 708,272 740,272 740,298;708,298 768,298 768,310 830,310 830,339 877,339 877,328;645,474 645,555;645,530 800,530;655,474 655,500;665,474 665,500;645,500 740,500 740,474 710,474;690,500 690,530;738,500 738,530;740,500 770,500 770,421;800,421 800,447;830,455 830,480 847,480 847,495 830,495 830,513;785,487 785,500 800,500;770,530 768,580 735,582;800,500 800,555 888,555 888,605;795,555 795,635;
795,582 950,582;827,582 827,620;857,582 857,665 888,665 888,610 920,610;872,635 920,635;872,610 872,635;905,610 905,635;920,607 1010,607 1010,635 920,635;790,635 850,635;800,650 860,650;795,662 960,662;795,668 827,668 827,742;827,742 1010,742;770,742 735,742 735,718 765,718 765,690 735,690 735,665;673,663 768,663 768,625;673,771 705,771 705,797 673,797;673,825 735,825 735,878;780,797 919,797;919,690 919,850 1012,850;800,710 830,710;780,690 827,685;780,700 820,700;
950,500 950,582;985,555 985,500 1016,500 1016,548;985,555 1040,555 1040,615;965,660 965,742;1012,610 1012,770;1012,770 1200,770;1012,715 1195,715;1012,690 1105,690;1042,715 1042,742 1103,742 1103,650;1073,580 1073,690;1050,620 1050,715;1040,662 1095,662;1060,675 1105,675;1073,742 1073,850;1040,850 1380,850;1134,610 1134,770;1105,690 1165,690 1165,635;1142,650 1165,650;1165,720 1165,770;1134,742 1180,742;1225,742 1320,742;1195,690 1195,715;1195,715 1220,742;1165,635 1195,635;1165,662 1257,662 1257,634 1347,634 1347,688 1317,690 1317,742;1195,665 1195,690;1142,650 1142,690;995,650 1012,650 1012,662 995,662;925,770 950,770;920,742 950,742 950,765;1105,742 1105,690;1060,620 1105,620 1134,650;
1012,770 1012,878 982,878 982,905 1043,905 1043,942 1104,942 1104,1013 1240,1014;1043,905 1043,878 1073,878;1127,785 1134,785 1134,797 1127,797 1127,785;1257,1062 1272,1064 1287,1078 1287,1196;1405,1131 1407,1116 1439,1117 1439,1143 1413,1144;1420,1170 1439,1172 1439,1196;1438,900 1438,878 1469,878 1469,905 1500,905 1500,930;
0,1092 40,1070 75,1060 95,1030 95,985 155,985 155,944 186,944 186,978;480,945 480,880 571,880 571,925;0,1185 8,1196`,
  rough: `220,71 225,78 218,90 215,120 208,130 215,178;216,284 190,290 185,305 216,312;185,295 245,290 260,282 308,295;443,71 455,85 471,110 455,160 430,260 410,315;498,140 530,140 572,132 620,160 700,183 780,238 920,290 1018,330 985,345 950,365;498,140 530,160 525,175;530,155 540,150;555,155 575,150 570,165 585,165;570,205 580,180 590,190 620,190;647,185 620,215 647,220 678,210;555,245 565,258 580,245 605,245 610,258;700,183 700,200 678,232;810,240 805,262 780,258 770,275 740,275;
308,295 360,315 405,330 480,380 522,412;360,315 430,315;400,318 505,318 560,340 615,375 645,395;400,318 450,360 480,380;463,315 463,262 477,262 477,275 508,275 523,290 523,310 560,330 615,375;480,380 520,372 555,378 585,398;600,340 597,355 605,375;877,328 950,365 1050,418 1155,500 1195,600 1195,635;950,365 940,400 943,435 908,470 985,508;
710,460 720,470;800,447 810,455 825,450 830,455;768,475 785,490 850,525 920,570 950,578 1000,600 1040,615 1100,620 1135,660;770,478 840,520 920,572;640,520 635,530 645,540;650,515 658,525 645,530;615,450 630,455 640,472;643,582 640,570 670,550 690,548 710,555;710,555 735,590 780,610 850,622 905,640 965,655;673,652 710,648 740,615 768,628 790,615 820,620;790,615 780,640 785,670 775,720 765,745 785,775 770,785 780,797 770,825 750,850 740,880;775,770 790,780;780,740 800,720 812,715 827,742;800,650 790,690;815,635 850,625;
950,635 965,655 965,670 919,690;930,700 945,700 930,715 940,730 925,742;920,770 930,785 945,780 950,765;965,660 985,675 1012,675;995,742 1005,755 995,800 1012,825 1040,850;960,740 1010,742;950,618 965,630 1000,630;
1016,548 1040,555 1080,580 1130,590 1150,605 1195,630;1115,585 1140,605 1170,610 1195,640;1135,605 1165,620 1195,645 1220,670;1195,640 1230,680 1300,745 1310,775 1335,800 1350,808 1360,825 1380,850 1438,900;1040,640 1055,630 1060,655 1045,655;1095,650 1130,690;1145,680 1150,690 1160,685;1110,705 1120,720 1115,735 1130,755;1170,720 1180,730;1155,742 1160,735 1175,745 1160,752;1195,742 1240,797 1260,795 1270,780 1287,780 1265,760 1225,745;1195,770 1205,775;1073,840 1088,842 1080,850 1078,878;
1240,1014 1255,1038 1257,1062;1266,851 1275,905 1295,935 1317,960 1320,995 1345,1012 1362,1015 1363,1060 1378,1064 1378,1090 1365,1092 1370,1110 1405,1131;1413,1144 1420,1170;1500,930 1495,935 1505,940 1568,940 1600,955 1640,1001 1700,1030 1755,1048 1800,1055 1858,1059 1905,1075 1955,1105 2000,1150 2046,1193;
5,397 40,425 75,445 95,490 120,510 150,505 175,512 160,530 185,550 182,575 190,600 220,595 225,605 205,635 220,665 205,682 145,692 125,685 150,675;0,618 45,622 80,650 125,675 150,680;205,682 250,715 275,730 305,760 348,805 385,755 390,720 401,715;
186,978 265,959 355,958 380,942 400,955 420,950 425,935 480,945;571,925 590,935 650,915 700,902 730,905 740,880`,
};

const EAST: Section = {
  transform: "translate(2020 720) scale(0.38265 0.33333)",
  straight: `1462,45 1358,170 1364,238 1320,294 1317,325 1325,333;1212,770 1212,875;1178,875 1295,875 1295,848 1284,846 1298,820 1355,820;1183,877 1183,957 1309,957;1183,902 1268,902;1205,877 1205,902;1268,877 1268,957;1183,914 1268,914;1198,902 1198,914;1226,902 1226,914;1183,923 1208,924 1210,937;1077,922 1183,922;1077,905 1077,922;1163,812 1040,964 974,1063 952,1243;1178,790 1195,778 1195,820;1155,770 1195,776;1125,813 1125,823 1175,823 1178,875;1198,850 1225,850 1225,875;1213,957 1216,1140 1222,1148;1309,957 1309,985;1308,860 1340,858;1308,863 1340,863;
666,994 690,993 710,998 748,997 749,1018 709,1021 710,1035 704,1035 704,1021 674,1021 672,1000 666,994;1348,643 1373,640`,
  rough: `1325,333 1327,355 1337,385 1340,415 1330,455 1325,510 1335,555 1338,625 1348,643;1340,385 1345,400;1358,686 1355,705 1330,727 1298,730 1285,742 1255,750 1210,770 1178,790 1175,808 1163,812;1155,770 1148,790 1138,797 1138,813 1125,813;1195,820 1188,825 1198,850;1077,905 1100,903 1105,910 1125,910 1130,898 1155,903 1180,918;1210,937 1230,932 1255,937 1265,955;1309,985 1305,975 1308,993 1325,993`,
};

const WEST_OUTLINE = "M1568,71 L1385,71 L1385,125 L862,125 L862,98 L599,97 L599,71 L276,71 L276,154 L184,186 L184,271 L105,271 L105,340 L69,341 L83,352 L71,375 L71,397 L92,397 L240,566 L315,583 L319,671 L425,683 L531,766 L361,997 L361,1022 L372,1024 L372,1045 L361,1048 L362,1051 L618,1051 L608,1079 L835,1156 L835,1187 L1040,1187 L1104,1189 L1207,1190 L1208,1195 L1568,1196";
const CENTRAL_TOP = "M-40,71 L400,71 L402,73 L954,73 L956,69 L1138,69 L1140,71 L1520,69 L1600,69";
const CENTRAL_BOTTOM = "L1600,1197 L1250,1197 L1130,1194 L1000,1195 L600,1197 L-40,1196";
const EAST_OUTLINE = "M-20,130 L64,130 L64,49 L262,48 L264,45 L815,45 L823,49 L833,45 L1487,45 L1482,62 L1481,95 L1488,115 L1488,135 L1480,155 L1465,170 L1440,172 L1436,183 L1450,198 L1445,205 L1436,205 L1425,220 L1412,230 L1405,242 L1380,268 L1368,272 L1350,272 L1337,290 L1328,310 L1325,331 L1340,335 L1360,355 L1370,375 L1366,382 L1355,382 L1343,376 L1341,388 L1355,405 L1376,423 L1378,437 L1370,448 L1358,456 L1335,455 L1334,470 L1347,505 L1350,520 L1338,538 L1352,570 L1360,600 L1373,632 L1376,650 L1370,672 L1358,686 L1375,695 L1390,717 L1392,740 L1388,757 L1365,766 L1345,775 L1332,792 L1332,805 L1340,817 L1360,822 L1355,830 L1333,833 L1330,845 L1340,857 L1345,872 L1332,880 L1335,897 L1347,912 L1335,925 L1318,950 L1320,975 L1330,1000 L1344,1022 L1310,1045 L1287,1062 L1284,1090 L1268,1106 L1250,1110 L1235,1120 L1220,1150 L1200,1175 L1184,1200 L1185,1220 L1178,1243 L848,1243 L848,1250 L560,1251 L430,1254 L200,1252 L-20,1253";

function parse(s: string): number[][][] {
  return s.split(";").map((l) => l.trim().split(/\s+/).map((p) => p.split(",").map(Number)));
}

function straightPath(s: string): string {
  return parse(s).map((l) => "M" + l.map((p) => p.join(",")).join("L")).join("");
}

/* Breaks each segment into short steps with a small repeatable sideways offset. */
function roughPath(s: string): string {
  let seed = 7;
  const rnd = () => {
    seed = (seed * 16807) % 2147483647;
    return seed / 2147483647 - 0.5;
  };
  return parse(s)
    .map((l) => {
      let d = `M${l[0][0]},${l[0][1]}`;
      for (let i = 1; i < l.length; i++) {
        const [x0, y0] = l[i - 1];
        const [x1, y1] = l[i];
        const len = Math.hypot(x1 - x0, y1 - y0);
        const n = Math.max(1, Math.round(len / 9));
        for (let k = 1; k < n; k++) {
          const o = rnd() * 5;
          d += `L${(x0 + ((x1 - x0) * k) / n - ((y1 - y0) / len) * o).toFixed(1)},${(y0 + ((y1 - y0) * k) / n + ((x1 - x0) / len) * o).toFixed(1)}`;
        }
        d += `L${x1},${y1}`;
      }
      return d;
    })
    .join("");
}

const Line = ({ d }: { d: string }) => (
  <path d={d} fill="none" stroke="#232323" strokeWidth="1.100" strokeLinejoin="round" vectorEffect="non-scaling-stroke" />
);

const TractMap = () => (
  <svg className="block" width="3133" height="1282" viewBox="301 99 3133 1282">
    <g fill="#ff9e17">
      <path transform={WEST.transform} d={WEST_OUTLINE + "Z"} />
      <path transform={CENTRAL.transform} d={CENTRAL_TOP + CENTRAL_BOTTOM + "Z"} />
      <path d="M1640 762.700L2030 763.300V1137.700L1640 1139z" />
      <path transform={EAST.transform} d={EAST_OUTLINE + "Z"} />
    </g>
    <g transform={WEST.transform}><Line d={WEST_OUTLINE} /></g>
    <g transform={CENTRAL.transform}><Line d={CENTRAL_TOP} /><Line d={CENTRAL_BOTTOM.replace("L", "M")} /></g>
    <Line d="M1661 762.900L2013 763.300M1661 1139L2013 1137.700" />
    <g transform={EAST.transform}><Line d={EAST_OUTLINE} /></g>
    {[WEST, CENTRAL, EAST].map((s, i) => (
      <g key={i} transform={s.transform}><Line d={straightPath(s.straight)} /><Line d={roughPath(s.rough)} /></g>
    ))}
  </svg>
);

/* ---------- chrome ---------- */

const Mn = ({ t }: { t: string }) => {
  const i = t.indexOf("&");
  if (i < 0) return <>{t}</>;
  return <>{t.slice(0, i)}<span className="underline underline-offset-[3px] decoration-1">{t[i + 1]}</span>{t.slice(i + 2)}</>;
};

const Grip = ({ cls = "" }: { cls?: string }) => (
  <div className={"flex h-[18px] w-1 shrink-0 justify-between " + cls}>
    <div className="w-px border-l border-dotted border-[#a5a5a5]" /><div className="w-px border-l border-dotted border-[#a5a5a5]" />
  </div>
);
const Caret = ({ light = false, cls = "" }: { light?: boolean; cls?: string }) => (
  <svg width="8" height="4" viewBox="0 0 8 4" className={"block shrink-0 " + cls}><path d="M0 0h8L4 4z" fill={light ? "#c8c8c8" : "#565656"} /></svg>
);
const Right = ({ color = "#565656" }: { color?: string }) => (
  <svg width="4" height="8" viewBox="0 0 4 8" className="block"><path d="M0 0v8l4-4z" fill={color} /></svg>
);
const B = ({ children, w = "w-[33px]" }: { children?: React.ReactNode; w?: string }) => (
  <div className={"flex shrink-0 items-center justify-center " + w}>{children}</div>
);

const PanelTitle = ({ title }: { title: string }) => (
  <div className="flex h-[18px] items-center pl-1 pr-[1px]">
    <span className="flex-1 pt-px">{title}</span>
    <svg width="26" height="12" viewBox="0 0 26 12" fill="none">
      <g stroke="#6a6a6a"><rect x=".5" y=".5" width="10" height="10" rx="2" /><rect x="3" y="5" width="3.500" height="3.500" /><path d="M5 5V3h3.500v3.500H6.500" />
      <rect x="14.500" y=".5" width="10" height="10" rx="2" /></g><path d="M17 3l5 5M22 3l-5 5" stroke="#555" strokeWidth="2" />
    </svg>
  </div>
);

const tree: [string, React.ReactNode, string?][] = [
  ["Favorites", <Star />], ["Home", <Folder16 home />, "r"], ["/", <Folder16 />, "r"], ["GeoPackage", <GeoPkg badge={false} s={16} />], ["SpatiaLite", <Feather badge={false} s={16} />],
  ["PostGIS", <Pg />], ["MSSQL", <Ms />], ["DB2", <Db2 />], ["WMS/WMTS", <Globe16 kind="wms" />], ["XYZ Tiles", <Globe16 kind="wms" />, "d"], ["OpenStreetMap", <Tiles sel />, "sel"],
  ["WCS", <Globe16 kind="wcs" />], ["WFS", <Globe16 kind="wfs" />], ["OWS", <Globe16 kind="ows" />], ["ArcGisMapServer", <Globe16 kind="ams" />], ["ArcGisFeatureServer", <Globe16 kind="afs" />], ["GeoNode", <GeoNode />],
];

const Check = ({ on = false }: { on?: boolean }) => (
  <div className="flex size-[14px] items-center justify-center border border-[#b8b8b8] bg-white">
    {on && <svg width="10" height="10" viewBox="0 0 10 10"><path d="M1.500 5l2.500 3.500L8 1" fill="none" stroke="#000" strokeWidth="2" /></svg>}
  </div>
);

const Spin = ({ w, children }: { w: string; children: React.ReactNode }) => (
  <div className={"flex h-[21px] items-stretch rounded-[2px] border border-[#a9a9a9] bg-white " + w}>
    <span className="flex flex-1 items-center pl-1">{children}</span>
    <div className="flex w-[14px] flex-col items-center justify-center gap-1 border-l border-[#b5b5b5] bg-[#f6f6f6]">
      <Caret cls="rotate-180" /><Caret />
    </div>
  </div>
);

const menus: [string, string][] = [
  ["Pro&ject", "w-[50px]"], ["&Edit", "w-[32px]"], ["&View", "w-[37px]"], ["&Layer", "w-[42px]"], ["&Settings", "w-[58px]"], ["&Plugins", "w-[51px]"],
  ["Vect&or", "w-[48px]"], ["&Raster", "w-[47px]"], ["&Database", "w-[66px]"], ["&Web", "w-[35px]"], ["Pro&cessing", "w-[73px]"], ["&Help", "w-[40px]"],
];
const vector = ["&Geoprocessing Tools", "G&eometry Tools", "&Analysis Tools", "&Data Management Tools", "&Research Tools"];
const geo: [string, string][] = [["Buffer...", "buffer"], ["Clip...", "clip"], ["Convex Hull...", "hull"], ["Difference...", "diff"], ["Dissolve...", "dissolve"], ["Intersection...", "clip"], ["Symmetrical Difference...", "symdiff"], ["Union...", "union"], ["Eliminate Selected Polygons...", "merge"]];

export default function App() {
  return (
    <div className="relative flex h-[1411px] w-[3434px] flex-col overflow-hidden whitespace-nowrap bg-[#eeeeee] font-['DejaVu_Sans',sans-serif] text-[12px] leading-[18px] text-[#141414]">
      <div className="flex h-5 shrink-0 gap-[6px] border-b border-[#d2d2d2] pl-[6px]">
        {menus.map(([m, w]) => (
          <div key={m} className={"flex h-5 shrink-0 items-center pl-1 pb-px " + w + (m === "Vect&or" ? " bg-[#308cc6] text-white" : "")}><span><Mn t={m} /></span></div>
        ))}
      </div>

      <div className="flex h-[39px] shrink-0 items-center border-b border-[#b5b5b5] bg-gradient-to-b from-[#f8f8f8] to-[#ececec] pl-[5px]">
        <Grip /><div className="w-[3px]" />
        <B><FileIcon /></B><B><FolderIcon /></B><B><SaveIcon /></B><B><SaveAsIcon /></B><B><LayoutIcon /></B><B><LayoutMgrIcon /></B><B><StyleIcon /></B>
        <Grip cls="ml-[10px]" />
        <div className="ml-1 flex h-[31px] w-8 shrink-0 items-center justify-center rounded-[3px] border border-[#b0b0b0] bg-[#dcdcdc]"><HandIcon /></div>
        <B><PanSelIcon /></B>
        <div className="ml-[482px] w-[12px] shrink-0"><Caret light /></div>
        <B w="w-6"><SelectIcon /></B><B w="w-5"><Caret /></B><B w="w-[25px]"><FormIcon /></B><B w="w-5"><Caret /></B>
        <B w="w-[29px]"><DeselectIcon /></B><B><TableIcon /></B><B><AbacusIcon /></B><B><GearIcon /></B><B><SigmaIcon /></B><B><RulerIcon /></B>
        <B w="w-[12px]"><Caret /></B><B><TipIcon /></B><B><TextIcon /></B><B w="w-[12px]"><Caret /></B>
      </div>

      <div className="flex h-[39px] shrink-0 items-center border-b-2 border-[#b5b5b5] bg-gradient-to-b from-[#f8f8f8] to-[#ececec] pl-[5px]">
        <Grip /><div className="w-[3px]" />
        <B><DataSrcIcon /></B><B><GeoPkg /></B><B><VNewIcon /></B><B><Feather /></B><B><ChipIcon /></B>
        <Grip cls="ml-[9px]" />
        <B w="w-[36px]"><PencilsGrey /></B><B w="w-0"><Caret light cls="mt-5 -ml-[12px]" /></B><div className="w-[2px]" /><B w="w-[26px]"><PencilIcon /></B><div className="w-[3px]" /><B><SaveGrey /></B><B><BlobGrey /></B>
        <div className="ml-[491px] w-0 shrink-0" />
        <B><TagIcon /></B><B><TagIcon pen /></B>
        <Grip cls="ml-[9px]" /><B w="w-[43px]"><MetaSearch /></B><Grip cls="ml-[2px]" /><B w="w-[43px]"><PythonIcon /></B><Grip cls="ml-[2px]" /><B w="w-[42px]"><BookIcon /></B><Grip cls="ml-[3px]" />
      </div>

      <div className="flex h-[1284px] shrink-0">
        <div className="flex w-[294px] shrink-0 flex-col pt-px">
          <PanelTitle title="Browser" />
          <div className="flex h-[31px] items-center gap-[9px] pl-2"><BoxPlus /><Refresh /><Funnel /><TreeArrow /><Info /></div>
          <div className="h-[654px] border border-[#b5b5b5] bg-white">
            {tree.map(([name, icon, st]) =>
              st === "sel" ? (
                <div key={name} className="flex h-[18px] w-[173px] items-center bg-[#308cc6] pl-[45px] text-white">{icon}<span className="ml-[7px] pt-[2px]">{name}</span></div>
              ) : (
                <div key={name} className="flex h-[18px] items-center">
                  <div className="flex w-[19px] justify-center">{st === "r" ? <Right /> : st === "d" ? <Caret /> : null}</div>
                  <div className="w-[26px] pl-1">{icon}</div><span className="pt-[2px]">{name}</span>
                </div>
              ),
            )}
          </div>
          <div className="flex h-[6px] items-center justify-center"><div className="h-px w-4 border-t border-dotted border-[#999]" /></div>
          <PanelTitle title="Layers" />
          <div className="flex h-[32px] items-center gap-[9px] pl-2"><Brush /><AddGroup /><Eye /><Funnel /><Epsilon /><Caret cls="-ml-[3px] -mr-[1px]" /><TreeArrow down /><TreeArrow /><BoxMinus /></div>
          <div className="flex-1 border border-[#b5b5b5] bg-white font-bold text-[#bcbcbc]">
            <div className="flex h-[18px] items-center pl-[23px]"><Check /><div className="ml-[6px] h-px w-4 bg-[#bb5a62]" /><span className="ml-[6px] pt-[2px] italic">shn2014v3_Segments</span></div>
            <div className="flex h-[18px] items-center border border-[#2a7fb4] bg-[#308cc6] pl-[22px] text-white"><Check on /><div className="ml-[6px] size-4 border border-[#96783f] bg-[#be9849]" /><span className="ml-[6px] pt-px underline underline-offset-[3px] decoration-1">riverside_tracts</span></div>
            <div className="flex h-[18px] items-center pl-[6px]"><Caret cls="mr-[9px]" /><Check /><div className="ml-[8px]"><Tiles /></div><span className="ml-[7px] pt-[2px] italic">OpenStreetMap</span></div>
          </div>
        </div>
        <div className="ml-[6px] flex-1 border-l border-t border-b border-[#b5b5b5] bg-white"><TractMap /></div>
      </div>

      <div className="flex h-[29px] shrink-0 items-center pl-1 text-[9px]">
        <div className="flex h-[23px] w-[248px] items-center rounded-[3px] border border-[#a9a9a9] bg-white pl-2 text-[12px] text-[#8c8c8c]">
          <svg width="13" height="13" viewBox="0 0 13 13" fill="none" stroke="#999" strokeWidth="1.400"><circle cx="5" cy="5" r="4" /><path d="M8 8l4 4.500" /></svg>
          <span className="ml-[7px]">Type to locate (Ctrl+K)</span>
        </div>
        <span className="ml-2 w-[2337px] shrink-0">1 legend entries removed.</span>
        <span className="w-[53px] shrink-0">Coordinate</span>
        <div className="flex h-[22px] w-[96px] shrink-0 items-center justify-center rounded-[2px] border border-[#a9a9a9] bg-white pb-[2px]">-117.943,35.106</div>
        <div className="ml-[3px] w-[30px] shrink-0"><svg width="17" height="17" viewBox="0 0 17 17" fill="none" stroke="#333"><rect x="3" y="1" width="6" height="9" rx="3" transform="rotate(-20 6 6)" fill="#999" /><path d="M1 7l8-4M5 2l3 6" strokeWidth="1.300" /><rect x="7" y="7" width="6" height="8" rx="3" transform="rotate(-25 10 11)" fill="#ddd" strokeWidth="1.300" /><path d="M10 6l5-4M9 12l4-1M2 11l3 3" /></svg></div>
        <span className="w-[28px] shrink-0">Scale</span>
        <div className="flex h-[22px] w-[96px] shrink-0 items-stretch rounded-[2px] border border-[#a9a9a9] bg-white">
          <span className="flex flex-1 items-center pl-[3px]">1:421086</span><div className="flex w-[19px] items-center justify-center border-l border-[#b5b5b5] bg-[#f6f6f6]"><Caret /></div>
        </div>
        <svg className="ml-[11px] shrink-0" width="14" height="16" viewBox="0 0 14 16" fill="none"><path d="M3 7V4.500a4 4 0 018 0V7" stroke="#999" strokeWidth="1.600" /><rect x="1" y="7" width="12" height="8.500" rx="1" fill="#555" /></svg>
        <span className="ml-2 w-[46px] shrink-0">Magnifier</span>
        <Spin w="w-[95px] shrink-0">100%</Spin>
        <span className="ml-[9px] w-[47px] shrink-0">Rotation</span>
        <Spin w="w-[90px] shrink-0">0.0 °</Spin>
        <div className="ml-[7px]"><Check on /></div>
        <span className="ml-[5px] w-[48px] shrink-0">Render</span>
        <svg className="shrink-0" width="16" height="16" viewBox="0 0 16 16" fill="none"><path d="M8 1l5 2.500 3 4-3.500 4.500h-9L0 7.500l3-4z" fill="#8a8a8a" /><path d="M8 1v12M4.500 3c-1 3-1 7 0 9.500M11.500 3c1 3 1 7 0 9.500M1 7.500h14M2.500 4.500h11M2.500 10.500h11" stroke="#eee" strokeWidth=".8" /><path d="M8 11v4M5 14h6" stroke="#666" strokeWidth="1.500" /></svg>
        <span className="ml-[2px] w-[73px] shrink-0">EPSG:4326</span>
        <svg className="shrink-0" width="16" height="16" viewBox="0 0 16 16"><path d="M8 1c9 0 9 11 3 11.500L9 15.500 7 13C-2 13-2 1 8 1z" fill="#5c5c5c" /><path d="M4 7h2M7.200 7h2M10.300 7h2" stroke="#fff" strokeWidth="1.700" /></svg>
        <svg className="ml-[17px] mt-4 shrink-0" width="12" height="12" viewBox="0 0 12 12" stroke="#aaa" strokeDasharray="1 2"><path d="M1 10.500h11M4 7.500h8M7 4.500h5M10 1.500h2" /></svg>
      </div>

      <div className="absolute left-[312px] top-5 flex h-[115px] w-[219px] flex-col border border-[#8f8f8f] bg-white">
        {vector.map((v, i) => (
          <div key={v} className={"flex h-[23px] shrink-0 items-center justify-between " + (i === 0 ? "-mx-px -mt-px border-b border-t border-[#2a7bae] bg-[#308cc6] pl-[28px] pr-[5px] text-white" : "pl-[27px] pr-1")}>
            <span><Mn t={v} /></span><Right color={i === 0 ? "#c6e0f2" : "#565656"} />
          </div>
        ))}
      </div>
      <div className="absolute left-[531px] top-5 flex h-[207px] w-[279px] flex-col border border-[#8f8f8f] bg-white">
        {geo.map(([t, k], i) => (
          <div key={t} className={"flex h-[23px] shrink-0 items-center pl-[7px] " + (i === 0 ? "-mt-px" : "") + (i === 4 ? " -mx-px border border-[#2a7bae] bg-[#308cc6] text-white" : "")}>
            <Geo kind={k} /><span className="ml-[4px]">{t}</span>
          </div>
        ))}
      </div>
    </div>
  );
}
